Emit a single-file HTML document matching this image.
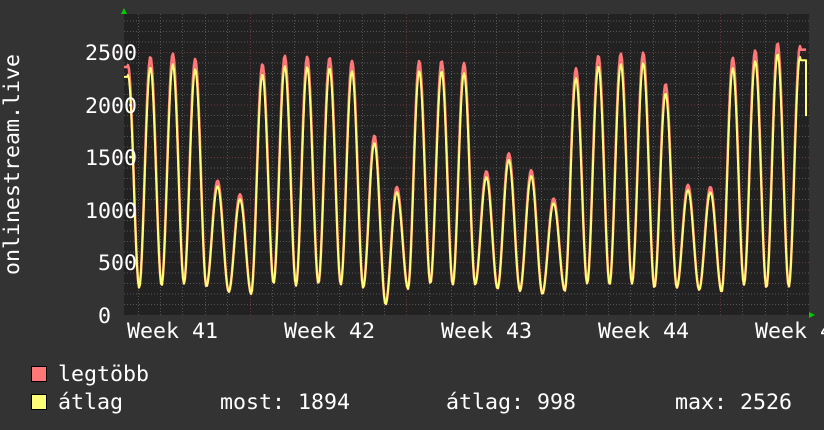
<!DOCTYPE html>
<html><head><meta charset="utf-8"><style>
html,body{margin:0;padding:0;background:#333;}
body{width:824px;height:430px;overflow:hidden;position:relative;font-family:"DejaVu Sans Mono","Liberation Mono",monospace;color:#fff;}
.t{position:absolute;font-size:21.6px;line-height:1;white-space:pre;}
.sq{position:absolute;width:14px;height:14px;border:1px solid #000;}
</style></head><body>
<svg id="g" width="824" height="430" style="position:absolute;left:0;top:0">
<rect x="124" y="14" width="685" height="301" fill="#222"/>
<g id="grid"></g>
<polyline id="pm" fill="none" stroke="#ff7777" stroke-width="2.6" stroke-linejoin="round"/>
<polyline id="pa" fill="none" stroke="#ffff77" stroke-width="2" stroke-linejoin="round"/>
<polygon points="121,14 127,14 124,8" fill="#00cc00"/>
<polygon points="809,312 809,318 815,315" fill="#00cc00"/>
</svg>
<div class="t" style="left:85px;top:43px">2500</div>
<div class="t" style="left:85px;top:96px">2000</div>
<div class="t" style="left:85px;top:148px">1500</div>
<div class="t" style="left:85px;top:201px">1000</div>
<div class="t" style="left:98px;top:253px">500</div>
<div class="t" style="left:98px;top:306px">0</div>
<div class="t" style="left:2px;top:275px;transform-origin:0 0;transform:rotate(-90deg)">onlinestream.live</div>
<div class="t" style="left:127px;top:321px">Week 41</div>
<div class="t" style="left:284px;top:321px">Week 42</div>
<div class="t" style="left:441px;top:321px">Week 43</div>
<div class="t" style="left:598px;top:321px">Week 44</div>
<div class="t" style="left:755px;top:321px">Week 45</div>
<div class="sq" style="left:31px;top:366px;background:#ff7777"></div>
<div class="sq" style="left:31px;top:394px;background:#ffff77"></div>
<div class="t" style="left:58px;top:364px">legtöbb</div>
<div class="t" style="left:58px;top:392px">átlag</div>
<div class="t" style="left:220px;top:392px">most: 1894</div>
<div class="t" style="left:446px;top:392px">átlag: 998</div>
<div class="t" style="left:675px;top:392px">max: 2526</div>
<script>
(function(){
var g=document.getElementById('grid'),h='';
function Y(v){return 315-v*0.105;}
for(var v=100;v<=2800;v+=100){var y=Y(v);if(y<14)break;var maj=v%500==0;
h+='<line x1="124" x2="809" y1="'+y+'" y2="'+y+'" stroke="'+(maj?'#6a3a3a':'#555')+'" stroke-width="1" stroke-dasharray="1,2"/>';}
for(var x=137.6;x<809;x+=22.4){var xx=Math.round(x)+0.5;var r=((xx-250)%156.8+156.8)%156.8;var maj=r<3||r>153.8;
h+='<line x1="'+xx+'" x2="'+xx+'" y1="14" y2="315" stroke="'+(maj?'#6a3a3a':'#555')+'" stroke-width="1" stroke-dasharray="1,2"/>';}
g.innerHTML=h;
var P=[2380,2460,2490,2440,1280,1150,2390,2470,2460,2450,2420,1710,1220,2420,2420,2400,1370,1540,1380,1110,2350,2470,2490,2500,2200,1240,1220,2450,2520,2590,2560];
var T=[260,280,300,270,220,200,300,280,300,290,260,100,250,300,290,290,250,230,200,230,300,290,300,260,260,240,220,290,260,270,300];
var pm=[],pa=[];
for(var x=124;x<=806;x++){
 var d=(x-128)/22.4;var k=Math.round(d);if(k<0)k=0;if(k>30)k=30;
 var ph=(x-128-22.4*k)/22.4;
 if(k==30&&ph>0)ph=Math.min(ph,0.04);
 if(k==0&&ph<0)ph=Math.max(ph,-0.03);
 var tk=ph>=0?T[Math.min(k,30)]:T[Math.max(k-1,0)];
 var f=Math.pow((Math.cos(2*Math.PI*ph)+1)/2,0.95);
 var vm=tk+(P[k]-tk)*f;
 var va=tk+(P[k]*0.96-tk)*f;
 pm.push(x+','+Y(vm).toFixed(1));pa.push(x+','+Y(va).toFixed(1));
}
pa.push('806,'+Y(1894).toFixed(1));
document.getElementById('pm').setAttribute('points',pm.join(' '));
document.getElementById('pa').setAttribute('points',pa.join(' '));
})();
</script>
</body></html>
